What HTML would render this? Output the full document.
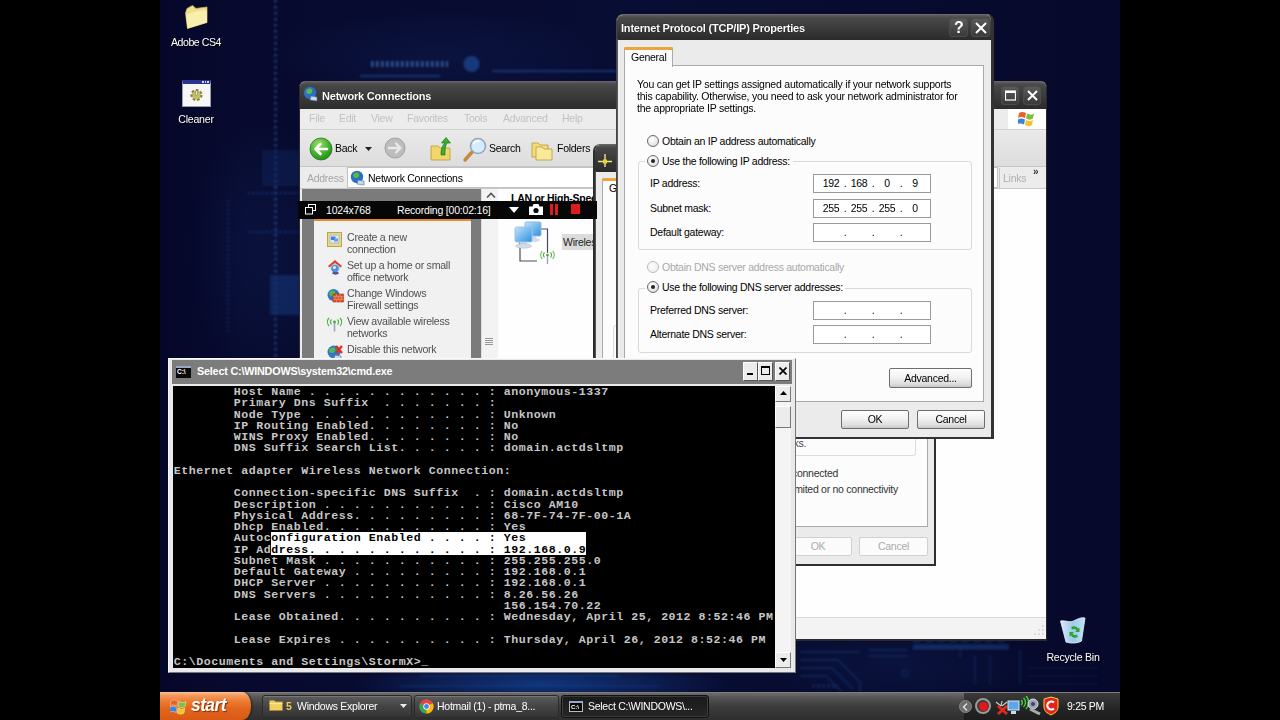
<!DOCTYPE html>
<html><head><meta charset="utf-8"><title>Desktop</title>
<style>
*{box-sizing:border-box;margin:0;padding:0}
html,body{width:1280px;height:720px;overflow:hidden;background:#000}
body{font-family:"Liberation Sans",sans-serif;font-size:10.5px;letter-spacing:-.27px;color:#000;position:relative}
.abs,.abs *{position:absolute}
#desk{left:0;top:0;width:1280px;height:720px;overflow:hidden;background:#090d33}
.t{white-space:nowrap;line-height:12px}
.ttl{color:#fff;font-weight:bold;font-size:11px;letter-spacing:-.2px;white-space:nowrap;text-shadow:0 0 1px #000}
.dim{color:#b4b4b4}
.btn{border:1px solid #6e6e6e;border-radius:2px;background:linear-gradient(#fdfdfd 0%,#f3f3f3 45%,#dcdcdc 85%,#c6c6c6 100%);text-align:center;font-size:10.5px;line-height:17px}
.btn.dis{color:#aaa;background:#fbfbfb;border-color:#d0d0d0}
.cb{width:15px;height:19px;background:#ececec;border:1px solid #fff;border-right-color:#555;border-bottom-color:#555}
.sb{width:16px;height:16px;background:#ececec;border:1px solid #fff;border-right-color:#777;border-bottom-color:#777}
pre b{color:#000;font-weight:bold}
.tbn{top:3px;height:23px;border-radius:3px;background:linear-gradient(#5c5c5c,#444 50%,#353535);border:1px solid #2a2a2a;box-shadow:inset 0 1px 0 #777}
.tbn.act{background:linear-gradient(#1a1a1a,#262626);border-color:#111;box-shadow:inset 0 0 0 1px #3c3c3c}
.lbl{text-align:center;font-size:10.6px;letter-spacing:-.25px;text-shadow:1px 1px 1px #000}
.ipf{border:1px solid #9a9a9a;background:#fff;height:19px;width:118px}
.ipf span{top:2px;font-size:10.5px;line-height:12px;white-space:nowrap}
.rad{width:12px;height:12px;border-radius:50%;border:1px solid #6a6a6a;background:radial-gradient(circle at 35% 35%,#fff 0,#e8e8e8 60%,#cfcfcf 100%)}
.rad.on::after{content:"";position:absolute;left:3px;top:3px;width:4px;height:4px;border-radius:50%;background:#222}
.d{font-size:10.5px;line-height:12px}
.tk{font-size:10.6px;color:#505050;line-height:12px}
.cap{width:18px;height:19px;border:1px solid #4c4c4c;border-radius:3px;background:linear-gradient(#5a5a5a,#3a3a3a)}
</style></head>
<body>
<div id="desk" class="abs">

<svg id="wall" style="left:160px;top:0" width="960" height="692" viewBox="160 0 960 692">
 <defs>
  <radialGradient id="g1"><stop offset="0" stop-color="#14408e" stop-opacity=".8"/><stop offset="1" stop-color="#16408c" stop-opacity="0"/></radialGradient>
  <radialGradient id="g2"><stop offset="0" stop-color="#10245c" stop-opacity=".32"/><stop offset="1" stop-color="#142c6c" stop-opacity="0"/></radialGradient>
  <filter id="bl"><feGaussianBlur stdDeviation="1.200"/></filter>
  <filter id="bl2"><feGaussianBlur stdDeviation=".6"/></filter>
  <linearGradient id="bg" x1="0" x2="1" y1="0" y2="0"><stop offset="0" stop-color="#05072a"/><stop offset=".08" stop-color="#070a2e"/><stop offset=".5" stop-color="#080d33"/><stop offset="1" stop-color="#06092b"/></linearGradient>
 </defs>
 <rect x="160" y="0" width="960" height="692" fill="url(#bg)"/>
 <ellipse cx="540" cy="684" rx="190" ry="22" fill="url(#g1)"/>
 <ellipse cx="900" cy="665" rx="140" ry="40" fill="url(#g2)"/>
 <ellipse cx="260" cy="250" rx="70" ry="130" fill="url(#g2)"/>
 <ellipse cx="440" cy="55" rx="170" ry="45" fill="url(#g2)"/>
 <g filter="url(#bl)" opacity=".5">
  <path d="M275.500 0V360" stroke="#4a7ad4" stroke-width="3" stroke-dasharray="2.500 3.500" opacity=".8"/>
  <path d="M371 64H448" stroke="#5a9af0" stroke-width="6" stroke-dasharray="2.500 2.500" opacity="1"/>
  <path d="M360 76H440M492 71H616" stroke="#2a5aa4" stroke-width="2.500" opacity=".9"/>
  <circle cx="471.500" cy="64" r="8" fill="#2a6ac8" opacity=".9"/>
  <path d="M228 200V335" stroke="#2a5098" stroke-width="5" stroke-dasharray="1.500 3" opacity=".5"/>
  <path d="M248 193H299M248 232H299" stroke="#2e62b4" stroke-width="3" stroke-dasharray="2 2.500" opacity=".7"/>
  <rect x="270" y="275" width="30" height="40" fill="#1c4c98" opacity=".75"/>
  <rect x="262" y="150" width="38" height="36" fill="#173a7c" opacity=".5"/>
  <path d="M800 652H860M800 660H838l22 22V692M800 668H832l22 22M800 676H826l16 16M868 650h40M868 656h40" stroke="#1d4f94" stroke-width="1.600" fill="none" opacity=".8"/>
  <path d="M913 647H1009" stroke="#2458a4" stroke-width="5" opacity=".8"/>
  <path d="M913 641H1009" stroke="#2458a4" stroke-width="3" stroke-dasharray="8 4" opacity=".6"/>
  <path d="M960 650v8M975 655v30M990 655v30M1020 650v35" stroke="#15356e" stroke-width="3" opacity=".6"/>
  <path d="M1028 668h70M1028 676h70M1028 684h70" stroke="#14306a" stroke-width="2" opacity=".5"/>
  <path d="M812 686h26" stroke="#2458a4" stroke-width="4" stroke-dasharray="3 2" opacity=".6"/>
  <circle cx="905" cy="673" r="3" fill="none" stroke="#2a5aa0" stroke-width="1.200" opacity=".7"/>
  <path d="M420 676h200M400 686h260" stroke="#1e56a8" stroke-width="2" opacity=".45"/>
 </g>
</svg>


<div id="icons" style="left:160px;top:0;width:960px;height:692px;color:#fff">
 <svg style="left:24px;top:4px" width="25" height="26" viewBox="0 0 25 26"><path d="M1.500 9L3 4.500 8.500 1.500l3.500 3L23 3v15.500L3.500 24.500z" fill="#efdf8c" stroke="#c9b45a" stroke-width=".8"/><path d="M2 10.500L12 7.500 23 6v12.500L3.500 24.500z" fill="#f8eeae"/></svg>
 <div class="t lbl" style="left:0;top:36px;width:72px;letter-spacing:-.45px">Adobe CS4</div>
 <div style="left:22px;top:80px;width:29px;height:27px;background:#f6f6f6;border:1px solid #9a9ab0;border-top:4px solid #27338c"></div>
 <div style="left:42px;top:81px;width:7px;height:2px;background:repeating-linear-gradient(90deg,#d8d8e8 0 1.500px,#27338c 1.500px 2.500px)"></div>
 <svg style="left:28px;top:87px" width="17" height="16" viewBox="0 0 17 16"><circle cx="8.500" cy="8" r="4.600" fill="#b9b662" stroke="#84833c" stroke-width="3" stroke-dasharray="2.400 1.700"/><circle cx="8.500" cy="8" r="4" fill="#c4c06a"/><rect x="7.500" y="3.500" width="2" height="5" rx="1" fill="#e8e8d0" stroke="#6a6a3a" stroke-width=".5"/></svg>
 <div class="t lbl" style="left:0;top:113px;width:72px">Cleaner</div>
 <svg style="left:899px;top:615px" width="28" height="30" viewBox="0 0 28 30"><defs><linearGradient id="rb" x1="0" y1="0" x2="1" y2="0"><stop offset="0" stop-color="#d8ecfa"/><stop offset=".5" stop-color="#9cc8ec"/><stop offset="1" stop-color="#c4e0f6"/></linearGradient></defs><path d="M1.500 6c5-1 9 2 13 0s8-4 11.500-3L22.500 26c-4 2.500-11 2.500-15.500 1z" fill="url(#rb)" stroke="#e8f4fc" stroke-width=".8"/><path d="M12 12.500a4.500 4.500 0 0 1 7 1l1.500-1v4.500h-4.500l1.500-1.500a2.600 2.600 0 0 0-4-1zM19 21.500a4.500 4.500 0 0 1-7-1l-1.500 1v-4.500h4.500l-1.500 1.500a2.600 2.600 0 0 0 4 1z" fill="#2aa62a"/></svg>
 <div class="t lbl" style="left:873px;top:651px;width:80px">Recycle Bin</div>
</div>


<div id="net" style="left:299px;top:81px;width:748px;height:560px;background:#ececec;border-radius:6px 6px 0 0;overflow:hidden;border:1px solid #2a2a2a;border-top-color:#666;border-bottom-width:2px">
 <div style="left:0;top:0;width:748px;height:27px;background:linear-gradient(#5a5a5a 0,#474747 12%,#3a3a3a 55%,#2c2c2c 100%)"></div>
 <svg style="left:3px;top:4px" width="17" height="17" viewBox="0 0 17 17"><circle cx="7" cy="7" r="6.2" fill="#2b6fc4"/><path d="M3 5c2-3 5-3 6-1s-1 4-3 4-3-1-3-3z" fill="#58b84a"/><path d="M8 10l6 1v4l-7-1z" fill="#cfd8ea" stroke="#4b6aa8" stroke-width=".6"/></svg>
 <div class="ttl" style="left:22px;top:8px;line-height:13px">Network Connections</div>
 <div class="cap" style="left:701px;top:4px"></div><div class="cap" style="left:723px;top:4px"></div>
 <svg style="left:705px;top:8px" width="11" height="11"><rect x=".5" y="1.5" width="10" height="8.5" fill="none" stroke="#fff" stroke-width="1.2"/><rect x="0" y="0.5" width="11" height="2.5" fill="#fff"/></svg>
 <svg style="left:727px;top:8px" width="11" height="11"><path d="M1 1l9 9M10 1l-9 9" stroke="#fff" stroke-width="2"/></svg>
 <!-- menubar -->
 <div style="left:0;top:27px;width:748px;height:21px;background:#ececec;border-bottom:1px solid #d0d0d0"></div>
 <div class="t dim" style="left:9px;top:30px;font-size:10.5px;color:#c2c2c2">File</div>
 <div class="t dim" style="left:39px;top:30px;font-size:10.5px;color:#c2c2c2">Edit</div>
 <div class="t dim" style="left:71px;top:30px;font-size:10.5px;color:#c2c2c2">View</div>
 <div class="t dim" style="left:107px;top:30px;font-size:10.5px;color:#c2c2c2">Favorites</div>
 <div class="t dim" style="left:164px;top:30px;font-size:10.5px;color:#c2c2c2">Tools</div>
 <div class="t dim" style="left:203px;top:30px;font-size:10.5px;color:#c2c2c2">Advanced</div>
 <div class="t dim" style="left:262px;top:30px;font-size:10.5px;color:#c2c2c2">Help</div>
 <div style="left:708px;top:27px;width:39px;height:20px;background:#fff"></div>
 <svg style="left:718px;top:28px" width="18" height="17" viewBox="0 0 18 17"><path d="M1 3c2-1.5 4-1.5 7 0l-1 5c-3-1.5-5-1.500-7 0z" fill="#e8632c"/><path d="M9 3.500c3 1.500 5 1.500 7 0l-1 5c-2 1.500-4 1.500-7 0z" fill="#7cc142"/><path d="M0 9.500c2-1.500 4-1.500 7 0l-1 5c-3-1.500-5-1.500-7 0z" fill="#3b83d6"/><path d="M8 10c3 1.500 5 1.500 7 0l-1 5c-2 1.500-4 1.500-7 0z" fill="#f5c228"/></svg>
 <!-- toolbar -->
 <div style="left:0;top:49px;width:748px;height:36px;background:linear-gradient(#e9e9e9,#dddddd);border-bottom:1px solid #c6c6c6"></div>
 <svg style="left:9px;top:54.500px" width="24" height="24" viewBox="0 0 24 24"><defs><radialGradient id="gb" cx=".4" cy=".3" r=".8"><stop offset="0" stop-color="#9be06a"/><stop offset=".6" stop-color="#3fae2a"/><stop offset="1" stop-color="#1f7d17"/></radialGradient></defs><circle cx="12" cy="12" r="11" fill="url(#gb)" stroke="#2b7a1f" stroke-width=".8"/><path d="M18 12H7M11.500 7L6.500 12l5 5" fill="none" stroke="#fff" stroke-width="2.600" stroke-linejoin="round" stroke-linecap="round"/></svg>
 <div class="t" style="left:35px;top:60px;font-size:10.5px">Back</div>
 <svg style="left:65px;top:65px" width="7" height="5"><path d="M0 0h7L3.500 4z" fill="#222"/></svg>
 <svg style="left:83.500px;top:55px" width="22" height="22" viewBox="0 0 22 22"><circle cx="11" cy="11" r="10" fill="#bdbdbd" stroke="#a0a0a0"/><path d="M5 11h11M12 6.500l4.500 4.500-4.500 4.500" fill="none" stroke="#e9e9e9" stroke-width="2.400" stroke-linejoin="round" stroke-linecap="round"/></svg>
 <svg style="left:129px;top:54px" width="24" height="26" viewBox="0 0 24 26"><path d="M2 10h7l2 2h10v12H2z" fill="#f2d56b" stroke="#b89a32" stroke-width=".8"/><path d="M12 19c0-6 1-9 4-12h-3.500L17 1.500 21.500 7H18c-2 3-2 7-2 12z" fill="#3faa2e" stroke="#1f7a18" stroke-width=".7"/></svg>
 <svg style="left:162px;top:55px" width="26" height="26" viewBox="0 0 26 26"><path d="M3 23l8-9" stroke="#c58a3c" stroke-width="3.500" stroke-linecap="round"/><circle cx="16" cy="9" r="7.500" fill="#d7ecfb" stroke="#8fa9c4" stroke-width="1.600"/><path d="M11.500 7a5 5 0 0 1 6-2.500" stroke="#fff" stroke-width="1.600" fill="none"/></svg>
 <div class="t" style="left:189px;top:60px;font-size:10.5px">Search</div>
 <svg style="left:230px;top:56px" width="24" height="24" viewBox="0 0 24 24"><path d="M2 5h6l2 2h8v12H2z" fill="#f4dc7c" stroke="#b89a32" stroke-width=".8"/><path d="M6 9h6l2 2h8v11H6z" fill="#f9e99a" stroke="#b89a32" stroke-width=".8"/></svg>
 <div class="t" style="left:257px;top:60px;font-size:10.5px">Folders</div>
 <!-- address -->
 <div style="left:0;top:85px;width:748px;height:22px;background:#ececec;border-bottom:1px solid #c8c8c8"></div>
 <div class="t dim" style="left:7px;top:90px;font-size:10.5px;color:#a6a6a6">Address</div>
 <div style="left:47px;top:85px;width:651px;height:21px;background:#fff;border:1px solid #c2c2c2"></div>
 <svg style="left:50px;top:88px" width="17" height="17" viewBox="0 0 17 17"><circle cx="7" cy="7" r="6.200" fill="#2b6fc4"/><path d="M3 5c2-3 5-3 6-1s-1 4-3 4-3-1-3-3z" fill="#58b84a"/><path d="M8 10l6 1v4l-7-1z" fill="#cfd8ea" stroke="#4b6aa8" stroke-width=".6"/></svg>
 <div class="t" style="left:68px;top:90px;font-size:10.5px">Network Connections</div>
 <div style="left:699px;top:86px;width:1px;height:20px;background:#c4c4c4"></div>
 <div class="t" style="left:703px;top:90px;font-size:10.5px;color:#b0b0b0">Links</div>
 <div class="t" style="left:733px;top:84px;font-size:10px;font-weight:bold;color:#333">»</div>
 <!-- content -->
 <div style="left:2px;top:107px;width:179px;height:430px;background:#7b7b7b"></div>
 <div style="left:14px;top:138px;width:157px;height:399px;background:#f1f1f1"></div>
 <div style="left:14px;top:137px;width:157px;height:2px;background:#e98a2a"></div>
 <div style="left:181px;top:107px;width:17px;height:430px;background:#f3f3f3;border-left:1px solid #ddd"></div>
 <svg style="left:186px;top:110px" width="10" height="6"><path d="M1 5.500L5 1.500l4 4" fill="none" stroke="#555" stroke-width="1.600"/></svg>
 <div style="left:185px;top:256px;width:8px;height:1px;background:#999;box-shadow:0 2px 0 #999,0 4px 0 #999,0 6px 0 #999"></div>
 <div style="left:198px;top:107px;width:549px;height:430px;background:#fefefe"></div>
 <div class="t" style="left:211px;top:110px;font-size:10.5px;font-weight:bold">LAN or High-Speed Internet</div>
 <!-- task items -->
 <div class="t tk" style="left:47px;top:149px">Create a new<br>connection</div>
 <div class="t tk" style="left:47px;top:177px">Set up a home or small<br>office network</div>
 <div class="t tk" style="left:47px;top:205px">Change Windows<br>Firewall settings</div>
 <div class="t tk" style="left:47px;top:233px">View available wireless<br>networks</div>
 <div class="t tk" style="left:47px;top:261px">Disable this network</div>
 
 <svg style="left:27px;top:150px" width="15" height="15" viewBox="0 0 15 15"><rect x=".5" y=".5" width="14" height="14" fill="#e6d88a" stroke="#b8a648"/><rect x="3" y="3" width="9" height="8" fill="#dfe9f6" stroke="#9aa8c0" stroke-width=".6"/><rect x="4" y="4.500" width="4.500" height="3.500" fill="#3f7fd6"/><rect x="7" y="6.500" width="4" height="3" fill="#5fa0e8"/></svg>
 <svg style="left:27px;top:177px" width="16" height="17" viewBox="0 0 16 17"><path d="M1 7l7-6 7 6-1.500 1.500L8 4 2.500 8.500z" fill="#d8442c"/><circle cx="8" cy="9.500" r="4.200" fill="#4f8fe0" stroke="#c8d8f0" stroke-width=".8"/><path d="M6 8c1-1.500 3-1 3 .5s-2 2-3 1z" fill="#d8ecff"/><path d="M5 14.500c2 1.500 5 1.500 7 0l-1-1.500H6z" fill="#4a5a88"/></svg>
 <svg style="left:27px;top:206px" width="17" height="16" viewBox="0 0 17 16"><circle cx="6.500" cy="7" r="6" fill="#2f78c8"/><path d="M2 5c2-3 5-3 6-1s-1 4-3 4-3-1-3-3z" fill="#58b84a"/><rect x="6" y="6" width="10.500" height="8" fill="#d8522c" stroke="#a03818" stroke-width=".6"/><path d="M6 8.700h10.500M6 11.400h10.500M9.500 6v2.700M13 6v2.700M8 8.700v2.700M11.500 8.700v2.700M14.500 8.700v2.700M9.500 11.400V14M13 11.400V14" stroke="#f0a070" stroke-width=".6"/></svg>
 <svg style="left:26px;top:235px" width="17" height="15" viewBox="0 0 17 15"><path d="M8.500 5v9.500" stroke="#9aa6c0" stroke-width="1.600"/><circle cx="8.500" cy="5" r="1.400" fill="#5a9a4a"/><path d="M5.500 2.500a3.500 3.500 0 0 0 0 5M11.500 2.500a3.500 3.500 0 0 1 0 5M3 1a6 6 0 0 0 0 8M14 1a6 6 0 0 1 0 8" fill="none" stroke="#4cb43c" stroke-width="1.200"/></svg>
 <svg style="left:27px;top:262px" width="17" height="16" viewBox="0 0 17 16"><circle cx="7" cy="8" r="6.500" fill="#2f78c8"/><path d="M2 6c2-3 5-3 6-1s-1 4-3 4-3-1-3-3z" fill="#58b84a"/><path d="M9 2l6 7M15 2l-6 7" stroke="#e0301c" stroke-width="2.400"/><path d="M8 11l6 1v3.500l-7-1z" fill="#cfd8ea" stroke="#4b6aa8" stroke-width=".6"/></svg>

 <!-- connection icon -->
 <div style="left:262px;top:152px;width:40px;height:16px;background:#dcdcdc"></div>
 <div class="t" style="left:263px;top:154px;font-size:10.5px;color:#222">Wireless</div>
 
 <svg style="left:212px;top:138px" width="46" height="46" viewBox="0 0 46 46"><defs><linearGradient id="mon" x1="0" y1="0" x2="1" y2="1"><stop offset="0" stop-color="#bfe4fb"/><stop offset="1" stop-color="#2f8fe0"/></linearGradient></defs>
  <path d="M24 9h11.500v24M8 22v19h17" fill="none" stroke="#4a4a5a" stroke-width="1.200"/>
  <rect x="13" y="2" width="16" height="14" rx="1.500" fill="url(#mon)" stroke="#8fb8e0" stroke-width="1"/><rect x="18" y="16" width="6" height="3" fill="#c8d4e8"/><ellipse cx="21" cy="20" rx="7" ry="2" fill="#d4dcec"/>
  <rect x="3" y="7" width="17" height="15" rx="1.500" fill="url(#mon)" stroke="#9cc4ea" stroke-width="1"/><rect x="8" y="22" width="7" height="3" fill="#c8d4e8"/><ellipse cx="11.500" cy="26" rx="8" ry="2.200" fill="#d4dcec" stroke="#a8b4cc" stroke-width=".5"/>
  <g transform="translate(.5 4)"><path d="M35 31v9" stroke="#9aa6c0" stroke-width="1.400"/><circle cx="35" cy="31" r="1.300" fill="#5a9a4a"/><path d="M32 28.500a3.500 3.500 0 0 0 0 5M38 28.500a3.500 3.500 0 0 1 0 5M29.800 27a6 6 0 0 0 0 8M40.200 27a6 6 0 0 1 0 8" fill="none" stroke="#4cb43c" stroke-width="1.100"/></g>
 </svg>

 <!-- status bar -->
 <div style="left:0;top:535px;width:748px;height:23px;background:#f3f3f3;border-top:1px solid #d6d6d6"></div>
 <svg style="left:734px;top:543px" width="12" height="12"><g fill="#dcdcdc"><rect x="8" y="0" width="2" height="2"/><rect x="4" y="4" width="2" height="2"/><rect x="8" y="4" width="2" height="2"/><rect x="0" y="8" width="2" height="2"/><rect x="4" y="8" width="2" height="2"/><rect x="8" y="8" width="2" height="2"/></g></svg>
</div>


<div id="prop" style="left:593px;top:144px;width:343px;height:422px;background:#ebebeb;border-radius:7px 7px 0 0;overflow:hidden;border:2px solid #2e2e2e;border-top:1px solid #666">
 <div style="left:0;top:0;width:343px;height:27px;background:linear-gradient(#5a5a5a 0,#464646 12%,#383838 55%,#2b2b2b 100%)"></div>
 <svg style="left:2px;top:8px" width="16" height="16" viewBox="0 0 16 16"><path d="M8 1v13M1 8.500h14" stroke="#e9e2a0" stroke-width="1.400"/><rect x="6" y="6.500" width="4" height="4" fill="#f2d11c"/></svg>
 <div style="left:7px;top:52px;width:326px;height:330px;background:#fcfcfc;border:1px solid #a9a9a9"></div>
 <div style="left:7px;top:33px;width:50px;height:21px;background:#fcfcfc;border:1px solid #a9a9a9;border-bottom:none;border-radius:2px 2px 0 0"></div>
 <div style="left:7px;top:33px;width:50px;height:3px;background:#eba53e;border-radius:2px 2px 0 0"></div>
 <div class="t d" style="left:14px;top:37px">General</div>
 <div style="left:18px;top:180px;width:303px;height:131px;border:1px solid #dcdcdc;border-radius:3px"></div>
 <div class="t d" style="left:117px;top:292px;color:#444">Allow other networks.</div>
 <div class="t d" style="left:197px;top:322px;color:#333">connected</div>
 <div class="t d" style="left:195px;top:338px;color:#333">limited or no connectivity</div>
 <div class="btn dis" style="left:189px;top:392px;width:68px;height:19px">OK</div>
 <div class="btn dis" style="left:264px;top:392px;width:69px;height:19px">Cancel</div>
 <div style="left:0;top:26px;width:1px;height:396px;background:#555"></div>
</div>


<div id="rec" style="left:298px;top:201px;width:299px;height:18px;background:#060606;color:#fff">
 <svg style="left:7px;top:3px" width="11" height="11"><rect x="3.500" y=".5" width="7" height="6" fill="none" stroke="#fff"/><rect x=".5" y="3.500" width="7" height="6.500" fill="#060606" stroke="#fff"/></svg>
 <div class="t" style="left:28px;top:3px;font-size:10.5px;letter-spacing:-.2px">1024x768</div>
 <div class="t" style="left:99px;top:3px;font-size:10.5px;letter-spacing:-.2px">Recording [00:02:16]</div>
 <svg style="left:211px;top:6px" width="10" height="6"><path d="M0 0h10L5 6z" fill="#fff"/></svg>
 <svg style="left:231px;top:3px" width="14" height="11" viewBox="0 0 14 11"><path d="M0 2.500h3.500L4.500 0h5l1 2.500H14V11H0z" fill="#fff"/><circle cx="7" cy="6.500" r="2.600" fill="#060606"/></svg>
 <div style="left:252px;top:3px;width:3px;height:11px;background:#e01b1b"></div><div style="left:257px;top:3px;width:3px;height:11px;background:#e01b1b"></div>
 <div style="left:273px;top:3px;width:9px;height:10px;background:#e01b1b"></div>
</div>


<div id="tcp" style="left:616px;top:14px;width:378px;height:425px;background:#ebebeb;border-radius:7px 7px 0 0;overflow:hidden;border:2px solid #333;border-right-width:3px;border-top:1px solid #6a6a6a;border-left:1px solid #444">
 <div style="left:0;top:0;width:378px;height:25px;background:linear-gradient(#5c5c5c 0,#484848 12%,#3a3a3a 55%,#2b2b2b 100%)"></div>
 <div class="ttl" style="left:4px;top:7px;line-height:13px">Internet Protocol (TCP/IP) Properties</div>
 <div class="cap" style="left:332px;top:3px;width:19px"></div><div class="cap" style="left:354px;top:3px;width:19px"></div>
 <div class="t" style="left:337px;top:4px;color:#fff;font-weight:bold;font-size:16px;line-height:17px;letter-spacing:0">?</div>
 <svg style="left:358px;top:7px" width="12" height="12"><path d="M1 1l10 10M11 1l-10 10" stroke="#fff" stroke-width="2"/></svg>
 <!-- tab pane -->
 <div style="left:7px;top:50px;width:360px;height:337px;background:#fcfcfc;border:1px solid #a9a9a9"></div>
 <div style="left:7px;top:32px;width:49px;height:20px;background:#fcfcfc;border:1px solid #a9a9a9;border-bottom:none;border-radius:2px 2px 0 0"></div>
 <div style="left:7px;top:32px;width:49px;height:3px;background:#eba53e;border-radius:2px 2px 0 0"></div>
 <div class="t d" style="left:14px;top:36px">General</div>
 <div class="t d" style="left:20px;top:63px;letter-spacing:-.225px">You can get IP settings assigned automatically if your network supports<br>this capability. Otherwise, you need to ask your network administrator for<br>the appropriate IP settings.</div>
 <div style="left:21px;top:146px;width:334px;height:89px;border:1px solid #d9d9d9;border-radius:3px"></div>
 <div style="left:21px;top:273px;width:334px;height:65px;border:1px solid #d9d9d9;border-radius:3px"></div>
 <div style="left:28px;top:140px;width:148px;height:13px;background:#fcfcfc"></div>
 <div style="left:28px;top:266px;width:200px;height:13px;background:#fcfcfc"></div>
 <div class="rad" style="left:30px;top:120px"></div>
 <div class="t d" style="left:45px;top:120px">Obtain an IP address automatically</div>
 <div class="rad on" style="left:30px;top:140px"></div>
 <div class="t d" style="left:45px;top:140px">Use the following IP address:</div>
 <div class="t d" style="left:33px;top:162px">IP address:</div>
 <div class="t d" style="left:33px;top:187px">Subnet mask:</div>
 <div class="t d" style="left:33px;top:211px">Default gateway:</div>
 <div class="ipf" style="left:196px;top:159px"><span style="left:5px;width:24px;text-align:center">192</span><span style="left:29px;width:4px;text-align:center">.</span><span style="left:33px;width:24px;text-align:center">168</span><span style="left:57px;width:4px;text-align:center">.</span><span style="left:61px;width:24px;text-align:center">0</span><span style="left:85px;width:4px;text-align:center">.</span><span style="left:89px;width:24px;text-align:center">9</span></div> <div class="ipf" style="left:196px;top:184px"><span style="left:5px;width:24px;text-align:center">255</span><span style="left:29px;width:4px;text-align:center">.</span><span style="left:33px;width:24px;text-align:center">255</span><span style="left:57px;width:4px;text-align:center">.</span><span style="left:61px;width:24px;text-align:center">255</span><span style="left:85px;width:4px;text-align:center">.</span><span style="left:89px;width:24px;text-align:center">0</span></div> <div class="ipf" style="left:196px;top:208px"><span style="left:29px;width:4px;text-align:center">.</span><span style="left:57px;width:4px;text-align:center">.</span><span style="left:85px;width:4px;text-align:center">.</span></div>
 <div class="rad" style="left:30px;top:246px;opacity:.45"></div>
 <div class="t d" style="left:45px;top:246px;color:#a8a8a8">Obtain DNS server address automatically</div>
 <div class="rad on" style="left:30px;top:266px"></div>
 <div class="t d" style="left:45px;top:266px">Use the following DNS server addresses:</div>
 <div class="t d" style="left:33px;top:289px">Preferred DNS server:</div>
 <div class="t d" style="left:33px;top:313px">Alternate DNS server:</div>
 <div class="ipf" style="left:196px;top:286px"><span style="left:29px;width:4px;text-align:center">.</span><span style="left:57px;width:4px;text-align:center">.</span><span style="left:85px;width:4px;text-align:center">.</span></div> <div class="ipf" style="left:196px;top:310px"><span style="left:29px;width:4px;text-align:center">.</span><span style="left:57px;width:4px;text-align:center">.</span><span style="left:85px;width:4px;text-align:center">.</span></div>
 <div class="btn" style="left:272px;top:353px;width:83px;height:20px;line-height:18px">Advanced...</div>
 <div class="btn" style="left:224px;top:395px;width:68px;height:19px">OK</div>
 <div class="btn" style="left:300px;top:395px;width:68px;height:19px">Cancel</div>
 <div style="left:0;top:24px;width:1px;height:401px;background:#5a5a5a"></div>
</div>


<div id="cmd" style="left:168px;top:358px;width:628px;height:315px;background:#e9e9e9;border:1px solid #f8f8f8;border-right-color:#777;border-bottom-color:#777">
 <div style="left:3px;top:1px;width:620px;height:24px;background:#7c7c7c"></div>
 <div style="left:7px;top:7px;width:15px;height:12px;background:#0a0a0a;border-top:2px solid #9aa6c8"></div>
 <div class="t" style="left:8px;top:9px;font-size:6.500px;line-height:8px;color:#fff;font-weight:bold;letter-spacing:0">C:\</div>
 <div class="ttl" style="left:28px;top:6px;line-height:13px;text-shadow:none;font-size:10.8px">Select C:\WINDOWS\system32\cmd.exe</div>
 <div class="cb" style="left:574px;top:3px"></div><div class="cb" style="left:589px;top:3px"></div><div class="cb" style="left:606px;top:3px"></div>
 <div style="left:578px;top:14px;width:6px;height:2px;background:#000"></div>
 <div style="left:592px;top:7px;width:9px;height:9px;border:1px solid #000;border-top-width:2px"></div>
 <svg style="left:610px;top:8px" width="8" height="8"><path d="M.5.5l7 7M7.500.5l-7 7" stroke="#000" stroke-width="1.700"/></svg>
 <div style="left:3.500px;top:27px;width:602.500px;height:282px;background:#000;overflow:hidden">
  <div style="left:98.500px;top:146px;width:315px;height:23px;background:#fff"></div>
  <pre style="left:1.300px;top:0;font-family:'Liberation Mono',monospace;font-weight:bold;font-size:11.600px;line-height:11.250px;letter-spacing:.54px;color:#c6c6c6">        Host Name . . . . . . . . . . . . : anonymous-1337
        Primary Dns Suffix  . . . . . . . :
        Node Type . . . . . . . . . . . . : Unknown
        IP Routing Enabled. . . . . . . . : No
        WINS Proxy Enabled. . . . . . . . : No
        DNS Suffix Search List. . . . . . : domain.actdsltmp

Ethernet adapter Wireless Network Connection:

        Connection-specific DNS Suffix  . : domain.actdsltmp
        Description . . . . . . . . . . . : Cisco AM10
        Physical Address. . . . . . . . . : 68-7F-74-7F-00-1A
        Dhcp Enabled. . . . . . . . . . . : Yes
        Autoc<b>onfiguration Enabled . . . . : Yes        </b>
        IP Ad<b>dress. . . . . . . . . . . . : 192.168.0.9</b>
        Subnet Mask . . . . . . . . . . . : 255.255.255.0
        Default Gateway . . . . . . . . . : 192.168.0.1
        DHCP Server . . . . . . . . . . . : 192.168.0.1
        DNS Servers . . . . . . . . . . . : 8.26.56.26
                                            156.154.70.22
        Lease Obtained. . . . . . . . . . : Wednesday, April 25, 2012 8:52:46 PM

        Lease Expires . . . . . . . . . . : Thursday, April 26, 2012 8:52:46 PM

C:\Documents and Settings\StormX&gt;_</pre>
 </div>
 <div style="left:606px;top:27px;width:16px;height:282px;background:#f4f4f4"></div>
 <div class="sb" style="left:606px;top:27px"></div>
 <div class="sb" style="left:606px;top:47px;height:22px"></div>
 <div class="sb" style="left:606px;top:293px"></div>
 <svg style="left:610.5px;top:32px" width="7" height="4"><path d="M0 4h7L3.500 0z" fill="#000"/></svg>
 <svg style="left:610.5px;top:299px" width="7" height="4"><path d="M0 0h7L3.500 4z" fill="#000"/></svg>
</div>


<div id="tb" style="left:160px;top:692px;width:960px;height:28px;background:linear-gradient(#8a8a8a 0,#6c6c6c 4%,#555 20%,#3d3d3d 50%,#2e2e2e 100%);color:#fff">
 <div style="left:0;top:0;width:91px;height:28px;border-radius:0 9px 9px 0/0 13px 13px 0;background:linear-gradient(#f9c09a 0,#f39a5c 12%,#ec7a30 35%,#e2641c 60%,#d95a16 100%);box-shadow:1px 0 2px #222"></div>
 <svg style="left:10px;top:6px" width="18" height="17" viewBox="0 0 18 17"><path d="M1 3c2-1.500 4-1.500 7 0l-1 5c-3-1.500-5-1.500-7 0z" fill="#e8632c" stroke="#fbd9b8" stroke-width=".5"/><path d="M9 3.500c3 1.500 5 1.500 7 0l-1 5c-2 1.500-4 1.500-7 0z" fill="#7cc142" stroke="#e8f5c8" stroke-width=".5"/><path d="M0 9.500c2-1.500 4-1.500 7 0l-1 5c-3-1.500-5-1.500-7 0z" fill="#3b83d6" stroke="#cfe0f5" stroke-width=".5"/><path d="M8 10c3 1.500 5 1.500 7 0l-1 5c-2 1.500-4 1.500-7 0z" fill="#f5c228" stroke="#fdf0b8" stroke-width=".5"/></svg>
 <div class="t" style="left:31px;top:4px;font-size:17.500px;line-height:18px;font-weight:bold;font-style:italic;letter-spacing:-.6px;text-shadow:1px 1px 1px #7a3008">start</div>
 <!-- buttons -->
 <div class="tbn" style="left:102px;width:150px"></div>
 <div class="tbn" style="left:254px;width:145px"></div>
 <div class="tbn act" style="left:401px;width:148px"></div>
 <svg style="left:109px;top:7px" width="14" height="12" viewBox="0 0 15 13"><path d="M.5 1.500h5l1.500 1.500h7.500v9.500H.5z" fill="#f0d060" stroke="#a88a2a" stroke-width=".7"/><path d="M.5 5h14" stroke="#fbeea0"/></svg>
 <div class="t" style="left:126px;top:8px;font-weight:bold;color:#f2c94a;font-size:10.5px">5</div>
 <div class="t" style="left:137px;top:8px;font-size:10.5px">Windows Explorer</div>
 <svg style="left:240px;top:12px" width="7" height="4"><path d="M0 0h7L3.500 4z" fill="#eee"/></svg>
 <svg style="left:259px;top:7px" width="15" height="15" viewBox="0 0 16 16"><circle cx="8" cy="8" r="7.500" fill="#e8453c"/><path d="M8 8L1.500 4.200A7.500 7.500 0 0 0 8 15.500z" fill="#34a853"/><path d="M8 8l0 7.500A7.500 7.500 0 0 0 14.500 4.200z" fill="#fbbc05"/><path d="M8 8L1.500 4.200A7.500 7.500 0 0 1 14.500 4.200z" fill="#e8453c"/><circle cx="8" cy="8" r="3.400" fill="#fff"/><circle cx="8" cy="8" r="2.600" fill="#4285f4"/></svg>
 <div class="t" style="left:277px;top:8px;font-size:10.5px">Hotmail (1) - ptma_8...</div>
 <div style="left:409px;top:9px;width:14px;height:11px;background:#0a0a0a;border:1px solid #bbb;border-top:2px solid #9aa6c8"></div>
 <div class="t" style="left:411px;top:12px;font-size:6px;line-height:7px;font-weight:bold;letter-spacing:0">C:\</div>
 <div class="t" style="left:428px;top:8px;font-size:10.5px">Select C:\WINDOWS\...</div>
 <!-- tray -->
 <div style="left:804px;top:1px;width:156px;height:27px;background:linear-gradient(#3a3a3a,#242424 60%,#1c1c1c)"></div>
 <div style="left:799px;top:8px;width:13px;height:13px;border-radius:50%;background:#6c6c6c;border:1px solid #888"></div>
 <svg style="left:802px;top:11px" width="6" height="8"><path d="M5 .5L1.500 4 5 7.500" fill="none" stroke="#ddd" stroke-width="1.500"/></svg>
 <div style="left:815px;top:6px;width:16px;height:16px;border-radius:50%;background:#3a3a3a;border:2px solid #9a9a9a"></div>
 <div style="left:818.500px;top:9.500px;width:9px;height:9px;border-radius:50%;background:#e01818"></div>
 <svg style="left:833px;top:6px" width="18" height="18" viewBox="0 0 18 18"><path d="M3 4l5 4M9 3l-1 5M14 4l-5 4" stroke="#ccc" stroke-width="1.200"/><path d="M5 8l9 8M14 8l-9 8" stroke="#e02a1a" stroke-width="3"/></svg>
 <svg style="left:847px;top:4px" width="24" height="20" viewBox="0 0 24 20"><rect x="1" y="5" width="11" height="9" fill="#5aa7ea" stroke="#d8e8f8" stroke-width="1"/><rect x="4" y="15" width="5" height="3" fill="#cfd8e8"/><path d="M14 9a3 3 0 0 0 0-5M16.500 11a6 6 0 0 0 0-9M19 13a9 9 0 0 0 0-13" fill="none" stroke="#3bd13b" stroke-width="1.500"/></svg>
 <svg style="left:866px;top:5px" width="18" height="18" viewBox="0 0 18 18"><circle cx="7" cy="7" r="5" fill="#9aa4b8" stroke="#dde" stroke-width="1"/><path d="M4 12l10 5" stroke="#aaa" stroke-width="3"/><circle cx="7" cy="7" r="2" fill="#445"/></svg>
 <svg style="left:882px;top:4px" width="18" height="20" viewBox="0 0 18 20"><path d="M2 3l7-2 7 2v8c0 4-3 6-7 8-4-2-7-4-7-8z" fill="#e2231a" stroke="#f7d23c" stroke-width="1"/><path d="M12 6.500a4 4 0 1 0 0 6" fill="none" stroke="#fff" stroke-width="2.200"/></svg>
 <div class="t" style="left:907px;top:8px;font-size:10.5px;letter-spacing:-.3px">9:25 PM</div>
</div>

<div style="left:0;top:0;width:160px;height:720px;background:#000"></div>
<div style="left:1120px;top:0;width:160px;height:720px;background:#000"></div>
</div>
</body></html>
